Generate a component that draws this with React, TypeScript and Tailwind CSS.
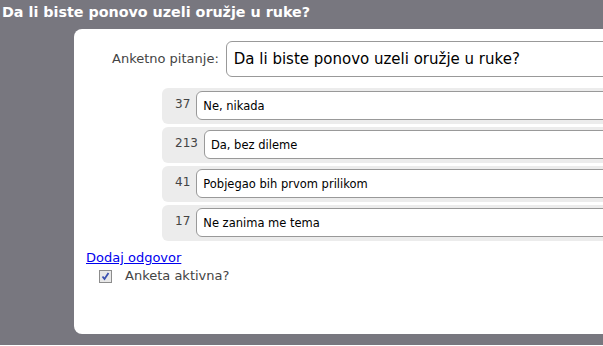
const answers = [
  { votes: 37, text: "Ne, nikada" },
  { votes: 213, text: "Da, bez dileme" },
  { votes: 41, text: "Pobjegao bih prvom prilikom" },
  { votes: 17, text: "Ne zanima me tema" },
]

const App = () => {
  return (
    <main className="w-[603px] h-[345px] overflow-hidden bg-[#78777f] font-['DejaVu_Sans',sans-serif]">
      <h1 className="h-[29px] pl-[2px] pt-[3px] text-[14.3px] leading-[18px] font-bold text-white whitespace-nowrap">
        Da li biste ponovo uzeli oružje u ruke?
      </h1>

      <div className="ml-[74px] w-[700px] h-[305px] bg-white rounded-l-[8px] pt-[12px]">
        <div className="flex items-center">
          <label className="pl-[38px] pr-[7px] text-[13px] text-[#444] whitespace-nowrap">
            Anketno pitanje:
          </label>
          <input
            className="w-[500px] h-[36px] px-[7px] border border-[#999] rounded-[6px] text-[15px] text-black outline-none"
            defaultValue="Da li biste ponovo uzeli oružje u ruke?"
          />
        </div>

        <div className="mt-[11px] ml-[88px] flex flex-col gap-[3px]">
          {answers.map((a) => (
            <div key={a.votes} className="h-[36px] flex items-start bg-[#ececec] rounded-[6px] pl-[13px]">
              <span className="pt-[8px] pr-[6px] text-[12px] leading-[16px] text-[#444]">{a.votes}</span>
              <input
                className="mt-[3px] w-[500px] h-[29px] px-[6px] border border-[#999] rounded-[6px] bg-white text-[11.5px] text-black outline-none"
                defaultValue={a.text}
              />
            </div>
          ))}
        </div>

        <div className="mt-[9px] ml-[12px] flex flex-col">
          <a href="#" className="text-[13px] leading-[16px] text-[#0000ee] underline w-fit">
            Dodaj odgovor
          </a>
          <label className="mt-[2px] ml-[13px] flex items-center text-[13px] leading-[16px] text-[#444]">
            <span className="w-[13px] h-[13px] border border-[#8c8c8c] bg-[#e8e8e8] flex items-center justify-center">
              <svg width="9" height="9" viewBox="0 0 9 9">
                <path d="M1.5 4.5 L3.5 7 L7.5 1" fill="none" stroke="#3a50b0" strokeWidth="1.8" />
              </svg>
            </span>
            <span className="ml-[13px]">Anketa aktivna?</span>
          </label>
        </div>
      </div>
    </main>
  )
}

export default App
